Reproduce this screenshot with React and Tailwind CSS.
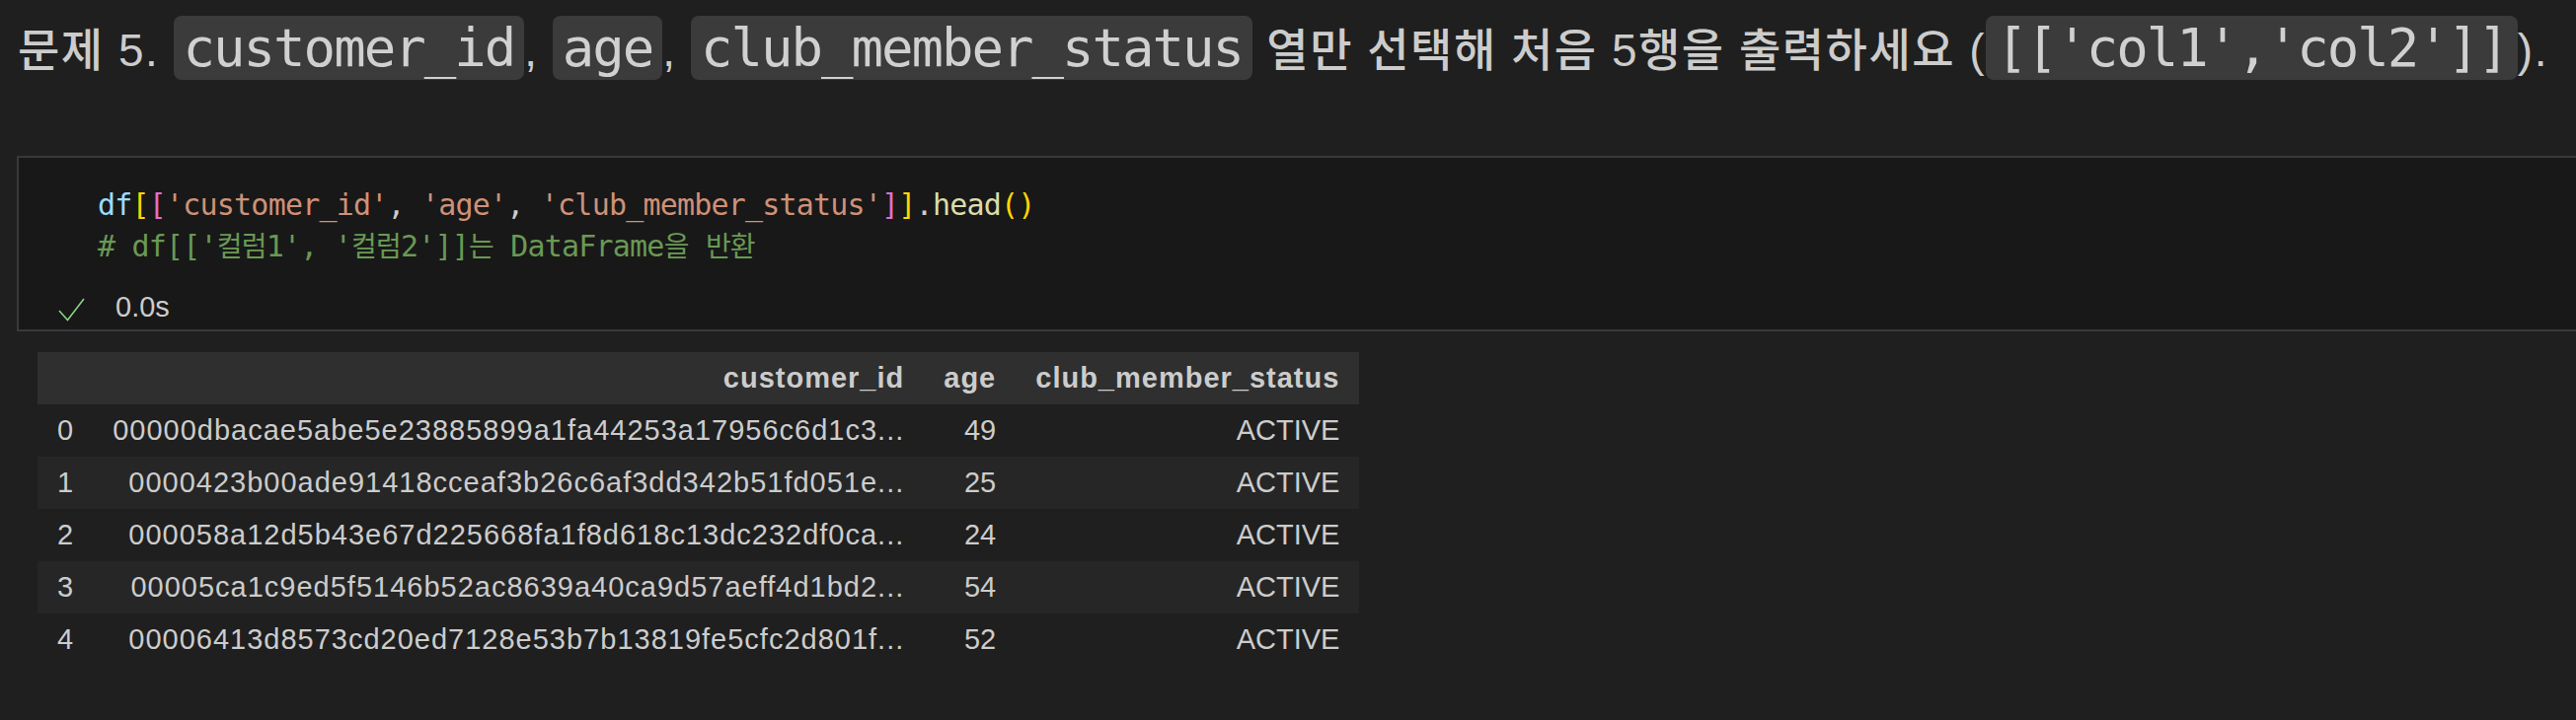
import React from 'react';

const rows = [
    ['0', '00000dbacae5abe5e23885899a1fa44253a17956c6d1c3...', '49', 'ACTIVE'],
    ['1', '0000423b00ade91418cceaf3b26c6af3dd342b51fd051e...', '25', 'ACTIVE'],
    ['2', '000058a12d5b43e67d225668fa1f8d618c13dc232df0ca...', '24', 'ACTIVE'],
    ['3', '00005ca1c9ed5f5146b52ac8639a40ca9d57aeff4d1bd2...', '54', 'ACTIVE'],
    ['4', '00006413d8573cd20ed7128e53b7b13819fe5cfc2d801f...', '52', 'ACTIVE'],
];

// inline code chip used in the markdown heading
const Code = ({ children }) => (
    <span className="inline-block rounded-[8px] bg-[#3b3b3b] px-[10px] font-['DejaVu_Sans_Mono',monospace] text-[54px] font-normal leading-[65px] tracking-[-2px] text-[#d0d0d0]">
        {children}
    </span>
);

const Ko = ({ children }) => <span className="text-[28px]">{children}</span>;

export default function App() {
    return (
        <div className="min-h-[730px] w-full overflow-hidden bg-[#1f1f1f] font-['Liberation_Sans','Noto_Sans_CJK_KR',sans-serif] text-[#cccccc]">
            {/* markdown heading */}
            <div className="whitespace-nowrap pl-[18px] pt-[16px] text-[46px] font-medium leading-[65px] tracking-[1.5px]">
                문제 5. <Code>customer_id</Code>, <Code>age</Code>, <Code>club_member_status</Code> 열만 선택해 처음 5행을 출력하세요 (<Code>[['col1','col2']]</Code>).
            </div>

            {/* code cell */}
            <div className="ml-[17px] mt-[74px] h-[178px] border-2 border-r-0 border-[#39393d] bg-[#181818] pt-[27px]">
                <pre className="pl-[80px] font-['DejaVu_Sans_Mono','Noto_Sans_CJK_KR',monospace] text-[30px] leading-[42px] tracking-[-0.8px] text-[#cccccc]">
                    <div>
                        <span className="text-[#9cdcfe]">df</span>
                        <span className="text-[#ffd700]">[</span>
                        <span className="text-[#da70d6]">[</span>
                        <span className="text-[#ce9178]">'customer_id'</span>
                        <span>, </span>
                        <span className="text-[#ce9178]">'age'</span>
                        <span>, </span>
                        <span className="text-[#ce9178]">'club_member_status'</span>
                        <span className="text-[#da70d6]">]</span>
                        <span className="text-[#ffd700]">]</span>
                        <span>.</span>
                        <span className="text-[#dcdcaa]">head</span>
                        <span className="text-[#ffd700]">()</span>
                    </div>
                    <div className="text-[#6a9955]">
                        # df[['<Ko>컬럼</Ko>1', '<Ko>컬럼</Ko>2']]<Ko>는</Ko> DataFrame<Ko>을</Ko> <Ko>반환</Ko>
                    </div>
                </pre>
                <div className="mt-[19px] flex items-center pl-[40px] text-[29px] leading-[40px]">
                    <svg width="27" height="24" viewBox="0 0 27 24" className="mt-[6px]">
                        <polyline points="1,13 9.5,22.5 26,1" fill="none" stroke="#89d185" strokeWidth="1.6" />
                    </svg>
                    <span className="ml-[31px] text-[#cccccc]">0.0s</span>
                </div>
            </div>

            {/* dataframe output */}
            <table className="ml-[38px] mt-[21px] border-collapse whitespace-nowrap text-[29px] text-[#cccccc]">
                <thead>
                    <tr className="h-[53px] bg-[#2f2f2f] tracking-[1px]">
                        <th className="px-[20px]"></th>
                        <th className="px-[20px] text-right font-bold">customer_id</th>
                        <th className="px-[20px] text-right font-bold">age</th>
                        <th className="px-[20px] text-right font-bold">club_member_status</th>
                    </tr>
                </thead>
                <tbody>
                    {rows.map((r, i) => (
                        <tr key={r[0]} className={`h-[53px] ${i % 2 === 1 ? 'bg-[#262626]' : ''}`}>
                            <td className="px-[20px] text-left">{r[0]}</td>
                            <td className="px-[20px] text-right tracking-[1px]">{r[1]}</td>
                            <td className="px-[20px] text-right">{r[2]}</td>
                            <td className="px-[20px] text-right">{r[3]}</td>
                        </tr>
                    ))}
                </tbody>
            </table>
        </div>
    );
}
